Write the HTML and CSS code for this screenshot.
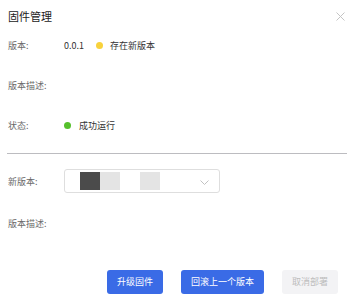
FILE: index.html
```html
<!DOCTYPE html>
<html lang="zh-CN">
	<head>
		<meta charset="UTF-8" />
		<meta name="viewport" content="width=device-width, initial-scale=1.0" />
		<title>固件管理</title>
		<link rel="stylesheet" href="styles.css">
	</head>
	<body>
		<div class="dialog">
			<div class="header">
				<span class="title">固件管理</span>
				<svg class="close" width="9" height="9" viewBox="0 0 9 9">
					<path d="M0.5 0.5 L8.5 8.5 M8.5 0.5 L0.5 8.5" stroke="#c4c4c4" stroke-width="1" fill="none" />
				</svg>
			</div>

			<div class="row first">
				<span class="label">版本:</span>
				<span class="value">0.0.1</span>
				<span class="dot yellow"></span>
				<span class="value">存在新版本</span>
			</div>
			<div class="row">
				<span class="label">版本描述:</span>
			</div>
			<div class="row">
				<span class="label">状态:</span>
				<span class="dot green"></span>
				<span class="value">成功运行</span>
			</div>

			<div class="divider"></div>

			<div class="row select-row">
				<span class="label">新版本:</span>
				<div class="select">
					<span class="block dark"></span>
					<span class="block light"></span>
					<span class="block gap"></span>
					<span class="block light"></span>
					<svg class="arrow" width="9" height="5" viewBox="0 0 9 5">
						<path d="M0.5 0.5 L4.5 4.5 L8.5 0.5" stroke="#c2c2c2" stroke-width="1" fill="none" />
					</svg>
				</div>
			</div>
			<div class="row desc-row">
				<span class="label">版本描述:</span>
			</div>

			<div class="footer">
				<a class="btn primary" href="javascript:;">升级固件</a>
				<a class="btn primary" href="javascript:;">回滚上一个版本</a>
				<a class="btn disabled" href="javascript:;">取消部署</a>
			</div>
		</div>
	</body>
</html>
```

FILE: styles.css
```css
* {
	margin: 0;
	padding: 0;
	box-sizing: border-box;
}
body {
	background-color: #fff;
	font-family: "Noto Sans CJK SC", "Noto Sans", sans-serif;
	font-size: 9px;
	color: #333;
}
.dialog {
	width: 360px;
	height: 303px;
	padding: 0 13px 0 8px;
}
.header {
	height: 30px;
	display: flex;
	align-items: center;
	justify-content: space-between;
	padding-top: 1px;
}
.title {
	font-size: 11px;
	color: #222;
}
.close {
	margin-right: 2px;
	margin-top: 2px;
}
.row {
	height: 30px;
	display: flex;
	align-items: center;
	margin-top: 10px;
}
.row.first {
	margin-top: 0;
}
.label {
	width: 56px;
	color: #6a6a6a;
}
.value {
	color: #333;
}
.dot {
	width: 7px;
	height: 7px;
	border-radius: 50%;
}
.yellow {
	background-color: #f8d23c;
	margin: 0 7px 0 12px;
}
.green {
	background-color: #56c02c;
	margin-right: 8px;
}
.divider {
	height: 1px;
	background-color: #bcbcc0;
	margin-top: 13px;
	margin-left: -1px;
}
.select-row {
	height: 24px;
	margin-top: 15px;
}
.select {
	width: 156px;
	height: 24px;
	border: 1px solid #dedede;
	border-radius: 3px;
	display: flex;
	align-items: center;
	padding: 0 10px 0 15px;
}
.block {
	width: 20px;
	height: 18px;
}
.dark {
	background-color: #4b4b4b;
}
.light {
	background-color: #e4e4e4;
}
.arrow {
	margin-left: auto;
	margin-top: 2px;
}
.desc-row {
	margin-top: 15px;
}
.footer {
	display: flex;
	justify-content: flex-end;
	gap: 18px;
	margin-top: 32px;
	margin-right: 9px;
}
.btn {
	height: 24px;
	line-height: 24px;
	padding: 0 10px;
	border-radius: 3px;
	text-decoration: none;
	font-size: 9px;
}
.primary {
	background-color: #3a6be6;
	color: #fff;
}
.disabled {
	background-color: #f3f3f5;
	color: #bdbdbd;
}
```
